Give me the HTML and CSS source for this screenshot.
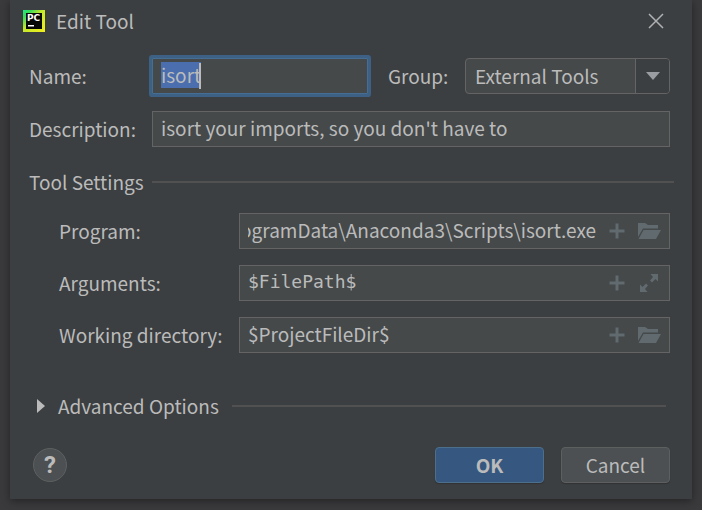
FILE: index.html
```html
<!DOCTYPE html>
<html lang="en">
<head>
<meta charset="utf-8">
<title>Edit Tool</title>
<link rel="stylesheet" href="styles.css">
</head>
<body>
<svg class="symbols" aria-hidden="true">
  <symbol id="plus" viewBox="0 0 16 16"><path d="M6.5 0.5h3v6h6v3h-6v6h-3v-6h-6v-3h6z"/></symbol>
  <symbol id="folder" viewBox="0 0 24 18"><path d="M1 1H8L11 3H21V6.500H6L1 15z"/><path d="M6.500 8H24L19 17H1.500z"/></symbol>
  <symbol id="expand" viewBox="0 0 18 18"><path d="M10.500 0H18V7.500L15.500 5L12 8.500L10 6.500L13 3z"/><path d="M0 10.500L2.500 13L6 9.500L8 11.500L5 15L7.500 18H0z"/></symbol>
</svg>
<main class="dialog">
  <header class="titlebar">
    <svg class="logo" viewBox="0 0 22 22" aria-hidden="true">
      <defs>
        <linearGradient id="rim" x1="0" y1="0" x2="1" y2="1">
          <stop offset="0" stop-color="#21e58a"/><stop offset=".18" stop-color="#35dd57"/><stop offset=".45" stop-color="#c3e82b"/><stop offset="1" stop-color="#f2ee1d"/>
        </linearGradient>
      </defs>
      <rect width="22" height="22" fill="url(#rim)"/>
      <rect x="3" y="3" width="16" height="16" fill="#050805"/>
      <text class="logo-text" x="4" y="11">PC</text>
      <rect x="5" y="15" width="6" height="1.500" fill="#fff"/>
    </svg>
    <h1 class="title">Edit Tool</h1>
    <button class="close" type="button" aria-label="Close">
      <svg viewBox="0 0 16 16"><path d="M1 1L15 15M15 1L1 15"/></svg>
    </button>
  </header>
  <form class="form">
    <div class="row top-row">
      <label for="name">Name:</label>
      <div class="field focused">
        <input id="name" type="text" value="isort" autofocus>
        <span class="caret"></span>
      </div>
      <label class="group-label" for="group">Group:</label>
      <div class="field combo">
        <select id="group"><option>External Tools</option></select>
        <span class="combo-arrow"><svg viewBox="0 0 14 8"><path d="M0 0H14L7 8z"/></svg></span>
      </div>
    </div>
    <div class="row">
      <label for="description">Description:</label>
      <div class="field"><input id="description" type="text" value="isort your imports, so you don't have to"></div>
    </div>

    <h2 class="section">Tool Settings</h2>
    <div class="settings">
      <div class="row">
        <label for="program">Program:</label>
        <div class="field">
          <input id="program" type="text" value="C:\ProgramData\Anaconda3\Scripts\isort.exe">
          <button class="tool plus" type="button" aria-label="Insert macro"><svg><use href="#plus"/></svg></button>
          <button class="tool folder" type="button" aria-label="Browse"><svg><use href="#folder"/></svg></button>
        </div>
      </div>
      <div class="row">
        <label for="arguments">Arguments:</label>
        <div class="field">
          <input id="arguments" class="mono" type="text" value="$FilePath$">
          <button class="tool plus" type="button" aria-label="Insert macro"><svg><use href="#plus"/></svg></button>
          <button class="tool expand" type="button" aria-label="Expand"><svg><use href="#expand"/></svg></button>
        </div>
      </div>
      <div class="row">
        <label for="directory">Working directory:</label>
        <div class="field">
          <input id="directory" type="text" value="$ProjectFileDir$">
          <button class="tool plus" type="button" aria-label="Insert macro"><svg><use href="#plus"/></svg></button>
          <button class="tool folder" type="button" aria-label="Browse"><svg><use href="#folder"/></svg></button>
        </div>
      </div>
    </div>

    <button class="section advanced" type="button" aria-expanded="false">
      <svg viewBox="0 0 8 14"><path d="M0 0L8 7L0 14z"/></svg>Advanced Options
    </button>

    <footer class="actions">
      <button class="help" type="button" aria-label="Help">?</button>
      <button class="button primary" type="submit">OK</button>
      <button class="button" type="button">Cancel</button>
    </footer>
  </form>
</main>
<script src="script.js"></script>
</body>
</html>
```
FILE: script.js
```js
// Show the end of the long program path and select the tool name.
const program = document.getElementById("program");
program.scrollLeft = program.scrollWidth;
const toolName = document.getElementById("name");
toolName.focus();
toolName.select();
```
FILE: styles.css
```css
* { box-sizing: border-box; }

body {
  margin: 0;
  min-height: 100vh;
  background: #3a3a3c;
  color: #bbbbbb;
  font: 19px/26px "Noto Sans CJK SC", "Noto Sans", sans-serif;
}

button, input, select { font: inherit; color: inherit; }
button { padding: 0; border: 0; background: none; }
svg { display: block; fill: currentColor; }
.symbols { display: none; }

.dialog {
  margin: 0 10px;
  padding-bottom: 16px;
  background: #3c3f41;
  box-shadow: 0 2px 8px rgba(0, 0, 0, 0.4);
}

.titlebar {
  display: flex;
  align-items: center;
  height: 42px;
  padding: 0 28px 0 13px;
}
.logo { width: 22px; height: 22px; }
.logo-text { font: bold 9px "DejaVu Sans", sans-serif; fill: #fff; }
.title { flex: 1; margin: 0 0 0 11px; font-size: 19px; font-weight: 400; }
.close svg { width: 16px; height: 16px; stroke: #afb1b3; stroke-width: 1.500; }

.form { padding: 16px 22px 0 19px; }
.row {
  display: grid;
  grid-template-columns: 123px minmax(0, 1fr);
  align-items: center;
  margin-bottom: 17px;
}
.row label { padding-bottom: 1px; }
.top-row { grid-template-columns: 123px minmax(0, 1fr) 97px 205px; }
.group-label { padding-left: 20px; }

.field {
  position: relative;
  display: flex;
  align-items: center;
  height: 36px;
  padding: 0 8px;
  border: 1px solid #646464;
  background: #45494a;
}
.field input {
  flex: 1;
  min-width: 0;
  height: 28px;
  padding: 0 0 3px;
  border: 0;
  outline: 0;
  background: none;
}
.field input::selection { background: #4b6eaf; color: #bbbbbb; }
.focused { border-color: #466d94; box-shadow: 0 0 0 3px #3d6185; border-radius: 1px; }
.caret {
  position: absolute;
  left: 46px;
  top: 4px;
  width: 2px;
  height: 26px;
  background: #bbbbbb;
}
.field .mono { font-family: "DejaVu Sans Mono", monospace; font-size: 18px; }

.combo { padding: 0; border-radius: 4px; }
.combo select {
  flex: 1;
  height: 34px;
  padding: 0 42px 1px 9px;
  border: 0;
  outline: 0;
  background: none;
  appearance: none;
}
.combo-arrow {
  position: absolute;
  inset: 0 0 0 auto;
  display: grid;
  place-items: center;
  width: 34px;
  border-left: 1px solid #646464;
  border-radius: 0 3px 3px 0;
  background: #3c3f41;
  color: #9a9da1;
  pointer-events: none;
}
.combo-arrow svg { width: 14px; height: 8px; }

.tool { color: #616a6e; }
.tool.plus { margin-left: 13px; }
.tool.plus svg { width: 16px; height: 16px; }
.tool.folder { margin-left: 12px; }
.tool.folder svg { width: 24px; height: 18px; }
.tool.expand { margin: 0 3px 0 15px; }
.tool.expand svg { width: 18px; height: 18px; }

.section {
  display: flex;
  align-items: center;
  gap: 8px;
  margin: 22px -4px 18px 0;
  font-size: 19px;
  font-weight: 400;
}
.section::after { content: ""; flex: 1; height: 2px; background: #515151; }
.settings { padding-left: 30px; }
.settings .row { grid-template-columns: 180px minmax(0, 1fr); margin-bottom: 16px; }
.advanced {
  width: calc(100% - 12px);
  margin: 40px 0 28px 8px;
  gap: 13px;
}
.advanced svg { width: 8px; height: 14px; }

.actions { display: flex; align-items: center; gap: 17px; }
.help {
  width: 34px;
  height: 34px;
  margin: 0 auto 0 4px;
  border: 1px solid #5e6060;
  border-radius: 50%;
  background: #4c5052;
  font: bold 24px/30px Roboto, sans-serif;
}
.button {
  width: 109px;
  height: 36px;
  border: 1px solid #5e6060;
  border-radius: 4px;
  background: #4c5052;
  box-shadow: 0 1px 1px rgba(0, 0, 0, 0.2);
}
.primary { border-color: #4c708c; background: #365880; font-weight: 700; }
```
